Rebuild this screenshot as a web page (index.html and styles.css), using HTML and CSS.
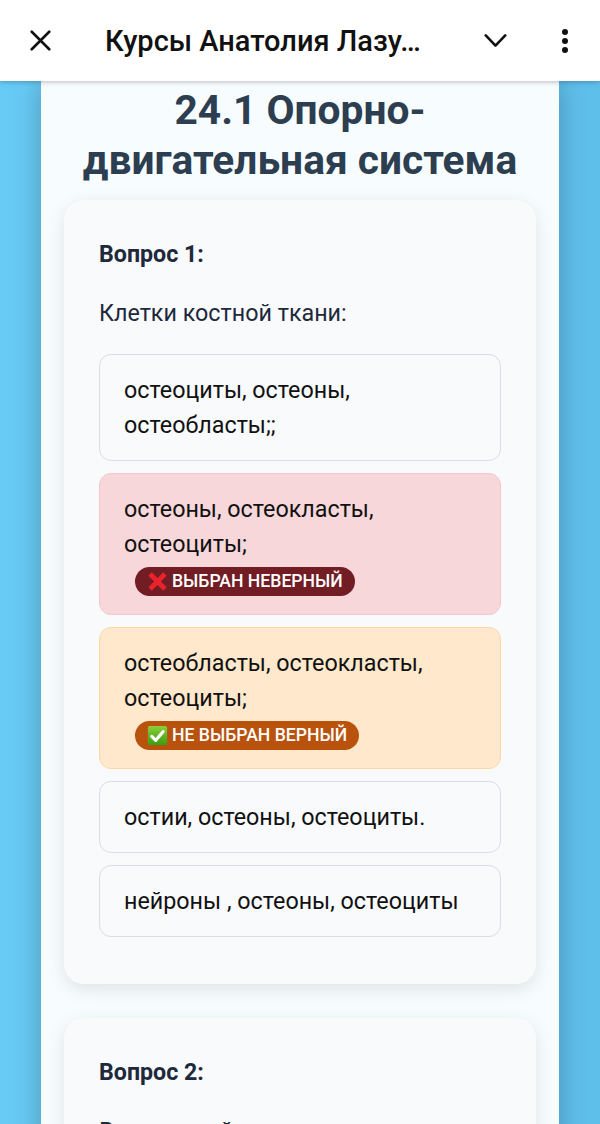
FILE: index.html
```html
<!DOCTYPE html>
<html lang="ru">
<head>
<meta charset="utf-8">
<title>Курсы Анатолия Лазуткина</title>
<link rel="stylesheet" href="styles.css">
</head>
<body>
<header class="bar">
  <svg class="ico ico-close" viewBox="0 0 24 24"><path d="M2 2 22 22M22 2 2 22"/></svg>
  <div class="bar-title">Курсы Анатолия Лазу…</div>
  <svg class="ico ico-chev" viewBox="0 0 24 14"><path d="M1.5 1.5 12 12.5 22.5 1.5"/></svg>
  <svg class="ico-more" viewBox="0 0 8 26"><circle cx="4" cy="4" r="3"/><circle cx="4" cy="13" r="3"/><circle cx="4" cy="22" r="3"/></svg>
</header>
<main class="sheet">
  <h1 class="title">24.1 Опорно-двигательная система</h1>
  <section class="card">
    <div class="q-label">Вопрос 1:</div>
    <p class="q-text">Клетки костной ткани:</p>
    <div class="options">
      <div class="opt">остеоциты, остеоны, остеобласты;;</div>
      <div class="opt opt-wrong">остеоны, остеокласты, остеоциты;
        <span class="badge badge-wrong"><svg class="emoji" viewBox="0 0 24 24"><path class="cross" d="M3.5 3.5 20.5 20.5M20.5 3.5 3.5 20.5"/></svg>ВЫБРАН НЕВЕРНЫЙ</span></div>
      <div class="opt opt-missed">остеобласты, остеокласты, остеоциты;
        <span class="badge badge-missed"><svg class="emoji" viewBox="0 0 24 24"><defs><linearGradient id="g" x1="0" y1="0" x2="0" y2="1"><stop offset="0" stop-color="#8ccf3a"/><stop offset="1" stop-color="#3f9a12"/></linearGradient></defs><rect x="1" y="1" width="22" height="22" rx="2" fill="url(#g)"/><path class="tick" d="M5.5 13 10 17.5 18.5 7.5"/></svg>НЕ ВЫБРАН ВЕРНЫЙ</span></div>
      <div class="opt">остии, остеоны, остеоциты.</div>
      <div class="opt">нейроны , остеоны, остеоциты</div>
    </div>
  </section>
  <section class="card">
    <div class="q-label">Вопрос 2:</div>
    <p class="q-text">В скелетной</p>
  </section>
</main>
</body>
</html>
```
FILE: styles.css
```css
* { box-sizing: border-box; }
html, body { margin: 0; height: 1124px; overflow: hidden; }
body {
  display: flex;
  flex-direction: column;
  align-items: center;
  background: linear-gradient(90deg, #68cbf5 0, #5fbfeb 100%);
  font-family: Roboto, "Noto Sans", sans-serif;
  color: #1e293b;
}
.bar {
  position: relative;
  z-index: 2;
  flex: none;
  width: 600px;
  height: 81px;
  display: flex;
  align-items: center;
  background: #fff;
  box-shadow: 0 1px 5px rgba(0, 0, 0, .25);
  color: #111;
}
.ico { fill: none; stroke: #111; stroke-linecap: round; stroke-linejoin: round; }
.ico-close { width: 21px; height: 21px; margin-left: 30px; stroke-width: 3; }
.bar-title { width: 356px; margin-left: 54px; font-size: 29px; font-weight: 500; white-space: nowrap; }
.ico-chev { width: 23px; height: 13px; margin-left: 23px; stroke-width: 2.8; }
.ico-more { width: 8px; height: 26px; margin-left: 54px; fill: #111; }
.sheet {
  flex: none;
  width: 518px;
  padding: 4px 23px 0;
  background: #f7fcff;
  box-shadow: 0 0 26px rgba(0, 0, 0, .25);
}
.title {
  margin: 0 0 15px;
  text-align: center;
  font-size: 40.7px;
  line-height: 50px;
  font-weight: 700;
  color: #2c3e50;
}
.card {
  margin-bottom: 34px;
  padding: 37px 35px 47px;
  background: #f8fafc;
  border-radius: 20px;
  box-shadow: 0 5px 18px rgba(0, 0, 0, .1);
}
.q-label { font-size: 23.2px; line-height: 35px; font-weight: 700; color: #1e293b; }
.q-text { margin: 24px 0 23px; font-size: 23.3px; line-height: 35px; color: #1e293b; }
.options { display: flex; flex-direction: column; gap: 12px; }
.opt {
  padding: 18px 24px 17px;
  background: #f8fafc;
  border: 1px solid #d9dee6;
  border-radius: 12px;
  font-size: 23.3px;
  line-height: 35px;
  color: #111;
}
.opt-wrong { background: #f8d7da; border-color: #f5c6cb; }
.opt-missed { background: #ffe8cc; border-color: #fdd8a5; }
.badge {
  display: flex;
  align-items: center;
  width: fit-content;
  height: 29px;
  margin: 5px 0 1px 11px;
  padding: 0 12px;
  border-radius: 15px;
  color: #fff;
  font-size: 17.6px;
  font-weight: 500;
  line-height: 29px;
}
.badge-wrong { background: #721c24; }
.badge-missed { background: #b8520d; }
.emoji { width: 21px; height: 21px; margin-right: 4px; flex: none; }
.cross { fill: none; stroke: #e8232a; stroke-width: 5.5; }
.tick { fill: none; stroke: #fff; stroke-width: 3.6; stroke-linecap: round; stroke-linejoin: round; }
```
